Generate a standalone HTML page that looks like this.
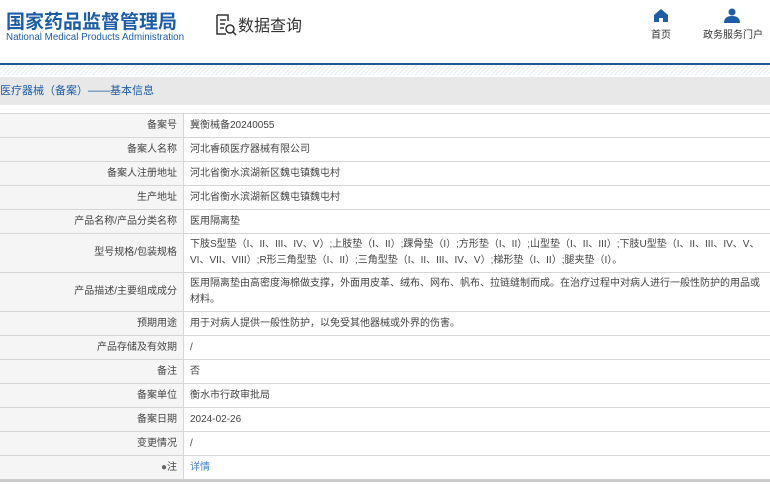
<!DOCTYPE html><html><head><meta charset="utf-8"><style>
body{margin:0;width:770px;height:491px;overflow:hidden;background:#fff;font-family:"Liberation Sans","Noto Sans CJK SC",sans-serif;}
.t1{position:absolute;left:6px;top:7px;font-size:19px;font-weight:bold;color:#1d5da8;}
.t2{position:absolute;left:6px;top:32px;font-size:9.8px;color:#1d5da8;}
.dq{position:absolute;left:214px;top:12px;font-size:16px;color:#333;}
.nav{position:absolute;top:26px;font-size:10px;color:#333;}
.line{position:absolute;left:0;top:63px;width:770px;height:2px;background:#1e5a96;}
.stripe{position:absolute;left:0;top:65px;width:770px;height:10px;background:repeating-linear-gradient(135deg,#e6eef6 0 1px,#fff 1px 3px);}
.bar{position:absolute;left:0;top:77px;width:770px;height:28px;background:#e8e8e8;font-size:11px;color:#1d5da8;line-height:28px;}
table{position:absolute;left:0;top:113px;width:770px;border-collapse:collapse;font-size:10px;color:#444;}
td{border-top:1px solid #d6d6d6;border-bottom:1px solid #d6d6d6;padding:0 6px;height:23px;line-height:16px;}
td.l{width:171px;background:#f5f5f5;text-align:right;border-right:1px solid #d6d6d6;}
tr:last-child td{border-bottom:3px solid #ccc;}
</style></head><body>
<div class="t1">国家药品监督管理局</div>
<div class="t2">National Medical Products Administration</div>
<svg style="position:absolute;left:214px;top:13px" width="24" height="24" viewBox="0 0 24 24" fill="none" stroke="#333" stroke-width="1.5"><path d="M3 2h11v6M3 2v19h9M6 7h6M6 11h5M6 15h4"/><circle cx="16" cy="16" r="4"/><path d="M19 19l3 3"/></svg>
<div class="dq" style="left:238px">数据查询</div>
<svg style="position:absolute;left:654px;top:9px" width="14" height="13" viewBox="0 0 14 13"><path d="M7 0L0 6v7h5V9h4v4h5V6z" fill="#1d5da8"/></svg>
<div class="nav" style="left:651px">首页</div>
<svg style="position:absolute;left:724px;top:8px" width="16" height="15" viewBox="0 0 16 15"><circle cx="8" cy="4" r="3.5" fill="#1d5da8"/><path d="M0 15c0-5 3-7 8-7s8 2 8 7z" fill="#1d5da8"/></svg>
<div class="nav" style="left:703px">政务服务门户</div>
<div class="line"></div><div class="stripe"></div>
<div class="bar">医疗器械（备案）——基本信息</div>
<table>
<tr><td class="l">备案号</td><td>冀衡械备20240055</td></tr>
<tr><td class="l">备案人名称</td><td>河北睿硕医疗器械有限公司</td></tr>
<tr><td class="l">备案人注册地址</td><td>河北省衡水滨湖新区魏屯镇魏屯村</td></tr>
<tr><td class="l">生产地址</td><td>河北省衡水滨湖新区魏屯镇魏屯村</td></tr>
<tr><td class="l">产品名称/产品分类名称</td><td>医用隔离垫</td></tr>
<tr><td class="l" style="height:38px">型号规格/包装规格</td><td>下肢S型垫（I、II、III、IV、V）;上肢垫（I、II）;踝骨垫（I）;方形垫（I、II）;山型垫（I、II、III）;下肢U型垫（I、II、III、IV、V、VI、VII、VIII）;R形三角型垫（I、II）;三角型垫（I、II、III、IV、V）;梯形垫（I、II）;腿夹垫（I）。</td></tr>
<tr><td class="l" style="height:38px">产品描述/主要组成成分</td><td>医用隔离垫由高密度海棉做支撑，外面用皮革、绒布、网布、帆布、拉链缝制而成。在治疗过程中对病人进行一般性防护的用品或材料。</td></tr>
<tr><td class="l">预期用途</td><td>用于对病人提供一般性防护，以免受其他器械或外界的伤害。</td></tr>
<tr><td class="l">产品存储及有效期</td><td>/</td></tr>
<tr><td class="l">备注</td><td>否</td></tr>
<tr><td class="l">备案单位</td><td>衡水市行政审批局</td></tr>
<tr><td class="l">备案日期</td><td>2024-02-26</td></tr>
<tr><td class="l">变更情况</td><td>/</td></tr>
<tr><td class="l"><span style="color:#666">●</span>注</td><td style="color:#3a7fd5">详情</td></tr>
</table>
</body></html>
